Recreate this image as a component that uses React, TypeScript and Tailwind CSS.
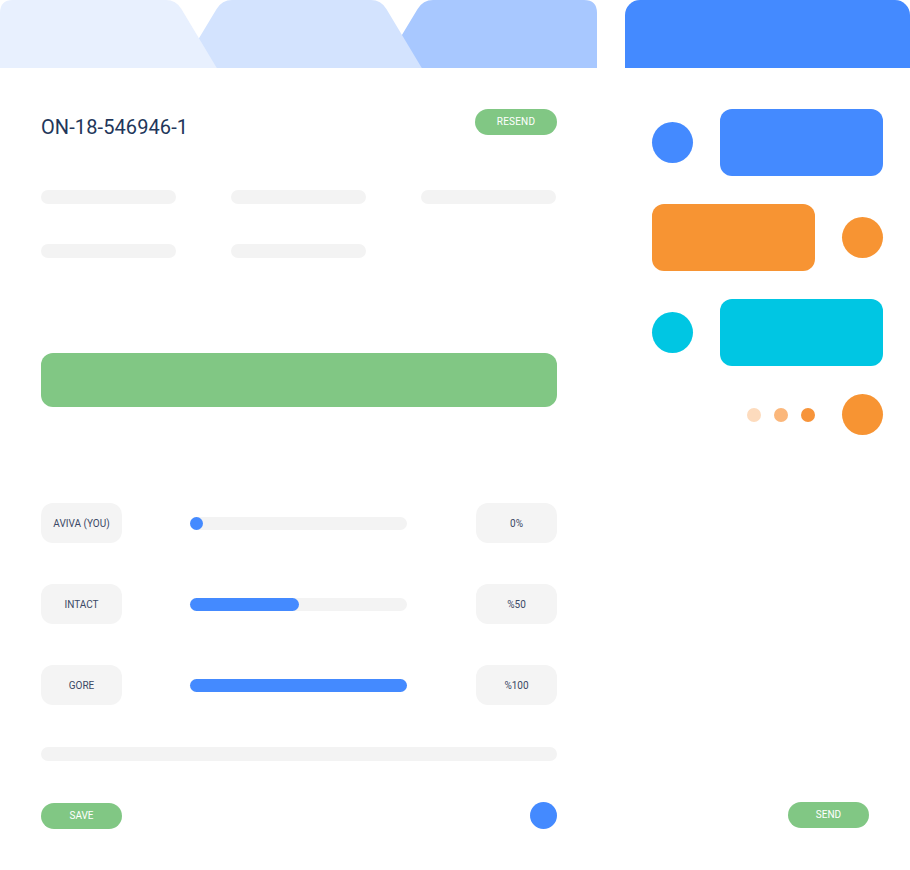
import React from "react";

const rows = [
  { label: "AVIVA (YOU)", value: "0%", pct: 0 },
  { label: "INTACT", value: "%50", pct: 50 },
  { label: "GORE", value: "%100", pct: 100 },
];

function Tabs() {
  return (
    <svg width="597" height="68" viewBox="0 0 597 68" className="block">
      <path d="M382,68 L417.6,9 Q423,0 433,0 L584,0 Q597,0 597,13 L597,68 Z" fill="#a8c8ff" />
      <path d="M181,68 L216.6,9 Q222,0 232,0 L371,0 Q381,0 386.4,9 L421.8,68 Z" fill="#d3e3fe" />
      <path d="M0,68 L0,13 Q0,0 13,0 L166,0 Q176,0 181.4,9 L216.8,68 Z" fill="#e8f0fe" />
    </svg>
  );
}

export default function App() {
  return (
    <div
      className="flex w-[910px] h-[870px] bg-white overflow-hidden"
      style={{ fontFamily: "Roboto, 'Liberation Sans', sans-serif" }}
    >
      {/* Left column */}
      <div className="w-[597px] flex flex-col">
        <Tabs />
        <div className="pl-[41px] pr-[40px] flex flex-col">
          <div className="mt-[41px] flex items-start justify-between h-[26px]">
            <div className="mt-[5px] text-[20px] leading-[26px] tracking-[0.1px] text-[#22365a]">ON-18-546946-1</div>
            <button className="w-[82px] h-[26px] rounded-full bg-[#81c784] text-white text-[10px] leading-none tracking-[0.2px]">
              RESEND
            </button>
          </div>

          <div className="mt-[55px] grid grid-cols-[135px_135px_135px] gap-x-[55px] gap-y-[40px]">
            <div className="h-[14px] rounded-full bg-[#f3f3f3]" />
            <div className="h-[14px] rounded-full bg-[#f3f3f3]" />
            <div className="h-[14px] rounded-full bg-[#f3f3f3]" />
            <div className="h-[14px] rounded-full bg-[#f3f3f3]" />
            <div className="h-[14px] rounded-full bg-[#f3f3f3]" />
          </div>

          <div className="mt-[95px] h-[54px] rounded-[12px] bg-[#81c784]" />

          <div className="mt-[96px] flex flex-col gap-[41px]">
            {rows.map((r) => (
              <div key={r.label} className="flex items-center h-[40px]">
                <div className="w-[81px] h-[40px] rounded-[12px] bg-[#f4f4f4] flex items-center justify-center text-[10px] text-[#3b4966]">
                  {r.label}
                </div>
                <div className="ml-[68px] w-[217px] h-[13px] rounded-full bg-[#f3f3f3] flex">
                  {r.pct === 0 ? (
                    <div className="w-[13px] h-[13px] rounded-full bg-[#448aff]" />
                  ) : (
                    <div
                      className="h-[13px] rounded-full bg-[#448aff]"
                      style={{ width: `${r.pct}%` }}
                    />
                  )}
                </div>
                <div className="ml-auto w-[81px] h-[40px] rounded-[12px] bg-[#f4f4f4] flex items-center justify-center text-[10px] text-[#3b4966]">
                  {r.value}
                </div>
              </div>
            ))}
          </div>

          <div className="mt-[42px] h-[14px] rounded-full bg-[#f3f3f3]" />

          <div className="mt-[41px] flex items-center justify-between">
            <button className="w-[81px] h-[26px] rounded-full bg-[#81c784] text-white text-[10px] leading-none">
              SAVE
            </button>
            <div className="w-[27px] h-[27px] rounded-full bg-[#448aff]" />
          </div>
        </div>
      </div>

      {/* Right column */}
      <div className="ml-[28px] w-[285px] flex flex-col">
        <div className="h-[68px] rounded-t-[15px] bg-[#448aff]" />
        <div className="pl-[27px] pr-[27px] mt-[41px] flex flex-col gap-[28px]">
          <div className="flex items-center justify-between h-[67px]">
            <div className="w-[41px] h-[41px] rounded-full bg-[#448aff]" />
            <div className="w-[163px] h-[67px] rounded-[12px] bg-[#448aff]" />
          </div>
          <div className="flex items-center justify-between h-[67px]">
            <div className="w-[163px] h-[67px] rounded-[12px] bg-[#f79433]" />
            <div className="w-[41px] h-[41px] rounded-full bg-[#f79433]" />
          </div>
          <div className="flex items-center justify-between h-[67px]">
            <div className="w-[41px] h-[41px] rounded-full bg-[#00c6e3]" />
            <div className="w-[163px] h-[67px] rounded-[12px] bg-[#00c6e3]" />
          </div>
          <div className="flex items-center justify-end h-[41px]">
            <div className="flex items-center gap-[13px]">
              <div className="w-[14px] h-[14px] rounded-full bg-[#fddbbd]" />
              <div className="w-[14px] h-[14px] rounded-full bg-[#fbb77b]" />
              <div className="w-[14px] h-[14px] rounded-full bg-[#f7943a]" />
            </div>
            <div className="ml-[27px] w-[41px] h-[41px] rounded-full bg-[#f79433]" />
          </div>
        </div>
        <div className="mt-[367px] flex justify-end pr-[41px]">
          <button className="w-[81px] h-[26px] rounded-full bg-[#81c784] text-white text-[10px] leading-none">
            SEND
          </button>
        </div>
      </div>
    </div>
  );
}
